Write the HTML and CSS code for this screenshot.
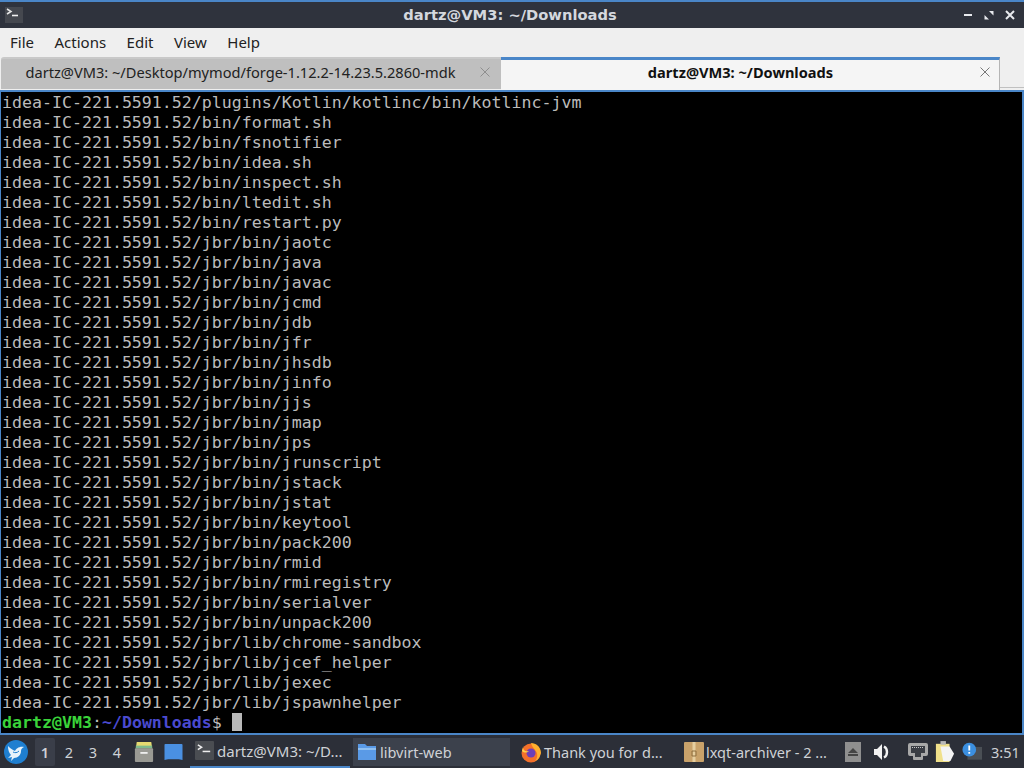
FILE: index.html
```html
<!DOCTYPE html>
<html lang="en">
<head>
<meta charset="utf-8">
<title>dartz@VM3: ~/Downloads</title>
<link rel="stylesheet" href="styles.css">
</head>
<body>
<div class="window">
  <header class="titlebar">
    <div class="app-icon"><svg width="18" height="16" viewBox="0 0 18 16"><path d="M2 2l4 2.500L2 7" fill="none" stroke="#e6e6e6" stroke-width="1.500"/><path d="M7 8.500h6" stroke="#f2f2f2" stroke-width="1.600"/></svg></div>
    <div class="title">dartz@VM3: ~/Downloads</div>
    <div class="win-controls">
      <svg width="10" height="10" viewBox="0 0 10 10"><path d="M1 5h8" stroke="#e8eaee" stroke-width="2"/></svg>
      <svg width="10" height="10" viewBox="0 0 10 10"><path d="M5 1h4.500v4.500zM5 9.500H.5V5z" fill="#e8eaee"/></svg>
      <svg width="10" height="10" viewBox="0 0 10 10"><path d="M1 1l8 8M9 1l-8 8" stroke="#e8eaee" stroke-width="2"/></svg>
    </div>
  </header>
  <nav class="menubar">
    <span class="menu-item">File</span><span class="menu-item">Actions</span><span class="menu-item">Edit</span><span class="menu-item">View</span><span class="menu-item">Help</span>
  </nav>
  <div class="tabbar">
    <div class="tab tab-inactive">
      <span class="tab-label">dartz@VM3: ~/Desktop/mymod/forge-1.12.2-14.23.5.2860-mdk</span>
      <svg class="tab-close" width="10" height="10" viewBox="0 0 10 10"><path d="M.5.500l9 9M9.500.500l-9 9" stroke="#8e8e8e" stroke-width="1"/></svg>
    </div>
    <div class="tab tab-active">
      <span class="tab-label">dartz@VM3: ~/Downloads</span>
      <svg class="tab-close" width="10" height="10" viewBox="0 0 10 10"><path d="M.5.500l9 9M9.500.500l-9 9" stroke="#777" stroke-width="1"/></svg>
    </div>
    <div class="tab-rest"></div>
  </div>
  <main class="terminal"><div class="line">idea-IC-221.5591.52/plugins/Kotlin/kotlinc/bin/kotlinc-jvm</div><div class="line">idea-IC-221.5591.52/bin/format.sh</div><div class="line">idea-IC-221.5591.52/bin/fsnotifier</div><div class="line">idea-IC-221.5591.52/bin/idea.sh</div><div class="line">idea-IC-221.5591.52/bin/inspect.sh</div><div class="line">idea-IC-221.5591.52/bin/ltedit.sh</div><div class="line">idea-IC-221.5591.52/bin/restart.py</div><div class="line">idea-IC-221.5591.52/jbr/bin/jaotc</div><div class="line">idea-IC-221.5591.52/jbr/bin/java</div><div class="line">idea-IC-221.5591.52/jbr/bin/javac</div><div class="line">idea-IC-221.5591.52/jbr/bin/jcmd</div><div class="line">idea-IC-221.5591.52/jbr/bin/jdb</div><div class="line">idea-IC-221.5591.52/jbr/bin/jfr</div><div class="line">idea-IC-221.5591.52/jbr/bin/jhsdb</div><div class="line">idea-IC-221.5591.52/jbr/bin/jinfo</div><div class="line">idea-IC-221.5591.52/jbr/bin/jjs</div><div class="line">idea-IC-221.5591.52/jbr/bin/jmap</div><div class="line">idea-IC-221.5591.52/jbr/bin/jps</div><div class="line">idea-IC-221.5591.52/jbr/bin/jrunscript</div><div class="line">idea-IC-221.5591.52/jbr/bin/jstack</div><div class="line">idea-IC-221.5591.52/jbr/bin/jstat</div><div class="line">idea-IC-221.5591.52/jbr/bin/keytool</div><div class="line">idea-IC-221.5591.52/jbr/bin/pack200</div><div class="line">idea-IC-221.5591.52/jbr/bin/rmid</div><div class="line">idea-IC-221.5591.52/jbr/bin/rmiregistry</div><div class="line">idea-IC-221.5591.52/jbr/bin/serialver</div><div class="line">idea-IC-221.5591.52/jbr/bin/unpack200</div><div class="line">idea-IC-221.5591.52/jbr/lib/chrome-sandbox</div><div class="line">idea-IC-221.5591.52/jbr/lib/jcef_helper</div><div class="line">idea-IC-221.5591.52/jbr/lib/jexec</div><div class="line">idea-IC-221.5591.52/jbr/lib/jspawnhelper</div><div class="line"><span class="p-user">dartz@VM3</span>:<span class="p-path">~/Downloads</span>$ <span class="cursor"></span></div></main>
</div>
<footer class="panel">
  <div class="start"><svg width="26" height="26" viewBox="0 0 26 26"><circle cx="13" cy="13" r="12" fill="#1f7fd0"/><path d="M5 7c3 3 5 4 7 5 1-2 4-5 9-4-2 1-3 2-3 4 0 4-3 7-7 7l-3 3 1-4-4 1 3-3c-2-2-3-5-3-9z" fill="#e8f3fb"/><path d="M10 13c2 1 4 1 6-1" stroke="#1f7fd0" fill="none"/></svg></div>
  <div class="desktops">
    <span class="desk desk-on">1</span><span class="desk">2</span><span class="desk">3</span><span class="desk">4</span>
  </div>
  <div class="launchers">
    <svg width="20" height="22" viewBox="0 0 22 24"><path d="M3 1h16l1 7H2z" fill="#e5d970"/><path d="M2 5h18v3H2z" fill="#7fb98c"/><rect x="1" y="8" width="20" height="15" rx="1" fill="#9a9a94"/><rect x="7" y="12" width="8" height="2" fill="#eee"/></svg>
    <svg width="21" height="18" viewBox="0 0 22 20"><path d="M1 2q0-1 1-1h18q1 0 1 1v17l-4-1H5l-4 1z" fill="#4a90e2"/></svg>
  </div>
  <div class="task task-term">
    <svg class="task-icon" width="19" height="19" viewBox="0 0 20 20"><rect width="20" height="20" rx="1" fill="#4a4d52"/><path d="M3 4l4 2.500L3 9" fill="none" stroke="#eee" stroke-width="1.500"/><path d="M8 11h8" stroke="#eee" stroke-width="1.600"/></svg>
    <span class="task-label">dartz@VM3: ~/D...</span>
  </div>
  <div class="task task-hover">
    <svg class="task-icon" width="20" height="18" viewBox="0 0 20 18"><path d="M1 1h7l2 2h9v14H1z" fill="#5a9ae6"/><path d="M1 5h18v2H1z" fill="#8fc0f2"/></svg>
    <span class="task-label">libvirt-web</span>
  </div>
  <div class="task task-fox">
    <svg class="task-icon" width="22" height="22" viewBox="0 0 22 22"><circle cx="11" cy="12" r="9.500" fill="#f3702a"/><path d="M11 2c5 0 10 4 10 10-1 4-3 7-6 8 3-3 3-8 0-11-1-2-3-3-4-7z" fill="#ffb02e"/><circle cx="11" cy="12" r="4.500" fill="#6b3fb8"/><path d="M3 6c0 4 3 5 6 4-2 2-5 2-7 0z" fill="#ffd04a"/></svg>
    <span class="task-label">Thank you for d...</span>
  </div>
  <div class="task task-last">
    <svg class="task-icon" width="20" height="20" viewBox="0 0 20 20"><rect width="20" height="20" rx="1" fill="#c9a26a"/><path d="M10 0v20" stroke="#e6cfa0" stroke-width="3"/><path d="M8 9h4v5H8z" fill="none" stroke="#8e6f3e"/></svg>
    <span class="task-label">lxqt-archiver - 2 ...</span>
  </div>
  <div class="tray">
    <span class="eject"><svg width="10" height="8" viewBox="0 0 10 8"><path d="M5 0l5 5H0zM0 6h10v2H0z" fill="#444"/></svg></span>
    <svg class="t-vol" width="16" height="16" viewBox="0 0 16 16"><path d="M0 5h3l5-5v16l-5-5H0z" fill="#f2f2f2"/><path d="M10 2.500c4 2 4 9 0 11" fill="none" stroke="#f2f2f2" stroke-width="2.400"/></svg>
    <svg class="t-net" width="20" height="17" viewBox="0 0 20 17"><path d="M2 0h16q2 0 2 2v9q0 2-2 2h-3v3q0 1-1 1H6q-1 0-1-1v-3H2q-2 0-2-2V2q0-2 2-2z" fill="#a8a8a8"/><path d="M3 3h14v7h-4v4H7v-4H3z" fill="#3a3d44"/><path d="M4 4.500h12" stroke="#c8c8c8" stroke-dasharray="1 1"/></svg>
    <svg class="t-clip" width="20" height="24" viewBox="0 0 22 24"><rect x="1" y="3" width="15" height="20" fill="#f0e08a"/><rect x="6" y="0" width="6" height="4" fill="#b9b9b9"/><path d="M6 6h10l5 8-4 8H9z" fill="#f4f4f4"/></svg>
    <svg class="t-note" width="20" height="19" viewBox="0 0 22 20"><rect x="6" y="5" width="16" height="14" fill="#4a4f55"/><circle cx="8" cy="8" r="7.500" fill="#3b8fe0"/><path d="M8 3.500v5.500M8 10.500v2" stroke="#fff" stroke-width="2"/></svg>
    <span class="clock">3:51</span>
  </div>
</footer>
</body>
</html>
```
FILE: styles.css
```css
* { box-sizing: border-box; }
html, body { margin: 0; padding: 0; width: 1024px; height: 768px; overflow: hidden; background: #2b2e37; }
body { display: flex; flex-direction: column; font-family: "Noto Sans", sans-serif; }

.window { height: 735px; display: flex; flex-direction: column; }

.titlebar { height: 28px; flex: none; background: #2f333d; border-top: 2px solid #4a86c8; display: grid; grid-template-columns: 1fr auto 1fr; align-items: center; padding: 0 9px 0 5px; }
.app-icon { width: 18px; height: 16px; background: #45484f; display: flex; margin-top: -1px; }
.title { text-align: center; font-family: "DejaVu Sans", sans-serif; font-weight: bold; font-size: 14.700px; color: #d4d8de; padding-bottom: 2px; }
.win-controls { display: flex; gap: 11px; align-items: center; justify-content: flex-end; }

.menubar { height: 29px; flex: none; background: #efefef; display: flex; align-items: center; padding: 0 0 2px 10px; gap: 20.500px; font-size: 15px; color: #222; }

.tabbar { height: 33px; flex: none; background: #efefef; display: flex; align-items: stretch; padding-left: 1px; }
.tab { width: 500px; display: flex; align-items: center; font-size: 14.600px; padding-right: 11px; }
.tab-label { flex: 1; text-align: center; }
.tab-inactive { background: #bfbfbf; color: #222; border-top: 2px solid #c9c9c9; margin-bottom: 1px; padding-bottom: 4px; border-radius: 3px 0 0 0; }
.tab-active { width: 499px; background: #f5f5f5; color: #111; font-weight: 700; border-top: 3px solid #4a86c8; border-right: 1px solid #b5b5b5; padding-bottom: 6px; padding-right: 9px; }
.tab-rest { flex: 1; border-bottom: 1px solid #c0c0c0; margin-bottom: 2px; }
.tab-close { flex: none; }

.terminal { flex: 1; background: #000; border: 2px solid #4a86c8; border-width: 2px 2px 2px 1px; padding: 1px 0 0 1px; color: #bbb; font-family: "DejaVu Sans Mono", monospace; font-size: 16.600px; line-height: 20px; overflow: hidden; }
.line { height: 20px; white-space: pre; }
.p-user { color: #3ad43a; font-weight: bold; }
.p-path { color: #4a4ad0; font-weight: bold; }
.cursor { display: inline-block; width: 10px; height: 18px; background: #b9b9b9; vertical-align: -3px; }

.panel { height: 33px; flex: none; background: #2c2f38; display: flex; align-items: center; color: #cfd2d6; font-size: 14px; }
.start { width: 35px; flex: none; padding-left: 3px; display: flex; }
.desktops { display: flex; height: 28px; width: 96px; flex: none; }
.desk { width: 24px; flex: none; display: flex; align-items: center; justify-content: center; font-size: 14.500px; }
.desk-on { width: 20px; margin-right: 2px; background: #3a3e49; font-weight: 600; border-radius: 2px; }
.launchers { display: flex; flex: none; align-items: center; gap: 9px; width: 59px; padding-left: 3px; }
.task { width: 160px; height: 28px; flex: none; display: flex; align-items: center; gap: 3px; padding-left: 4px; font-size: 14.500px; white-space: nowrap; }
.task-term { height: 32px; margin-right: 3px; padding-left: 5px; gap: 3px; border-bottom: 2px solid #4a86c8; font-size: 15px; }
.task-hover { background: #3c414c; width: 157px; margin-right: 6px; }
.task-fox { width: 164px; gap: 2px; }
.task-last { width: 165px; gap: 2px; }
.task-icon { flex: none; }
.tray { flex: 1; display: flex; align-items: center; height: 33px; }
.eject { width: 16px; height: 20px; background: #8f8f8f; display: flex; align-items: center; justify-content: center; }
.t-vol { margin-left: 13px; }
.t-net { margin-left: 18px; }
.t-clip { margin-left: 7px; }
.t-note { margin-left: 7px; }
.clock { margin-left: 9px; font-size: 14.500px; }
```
